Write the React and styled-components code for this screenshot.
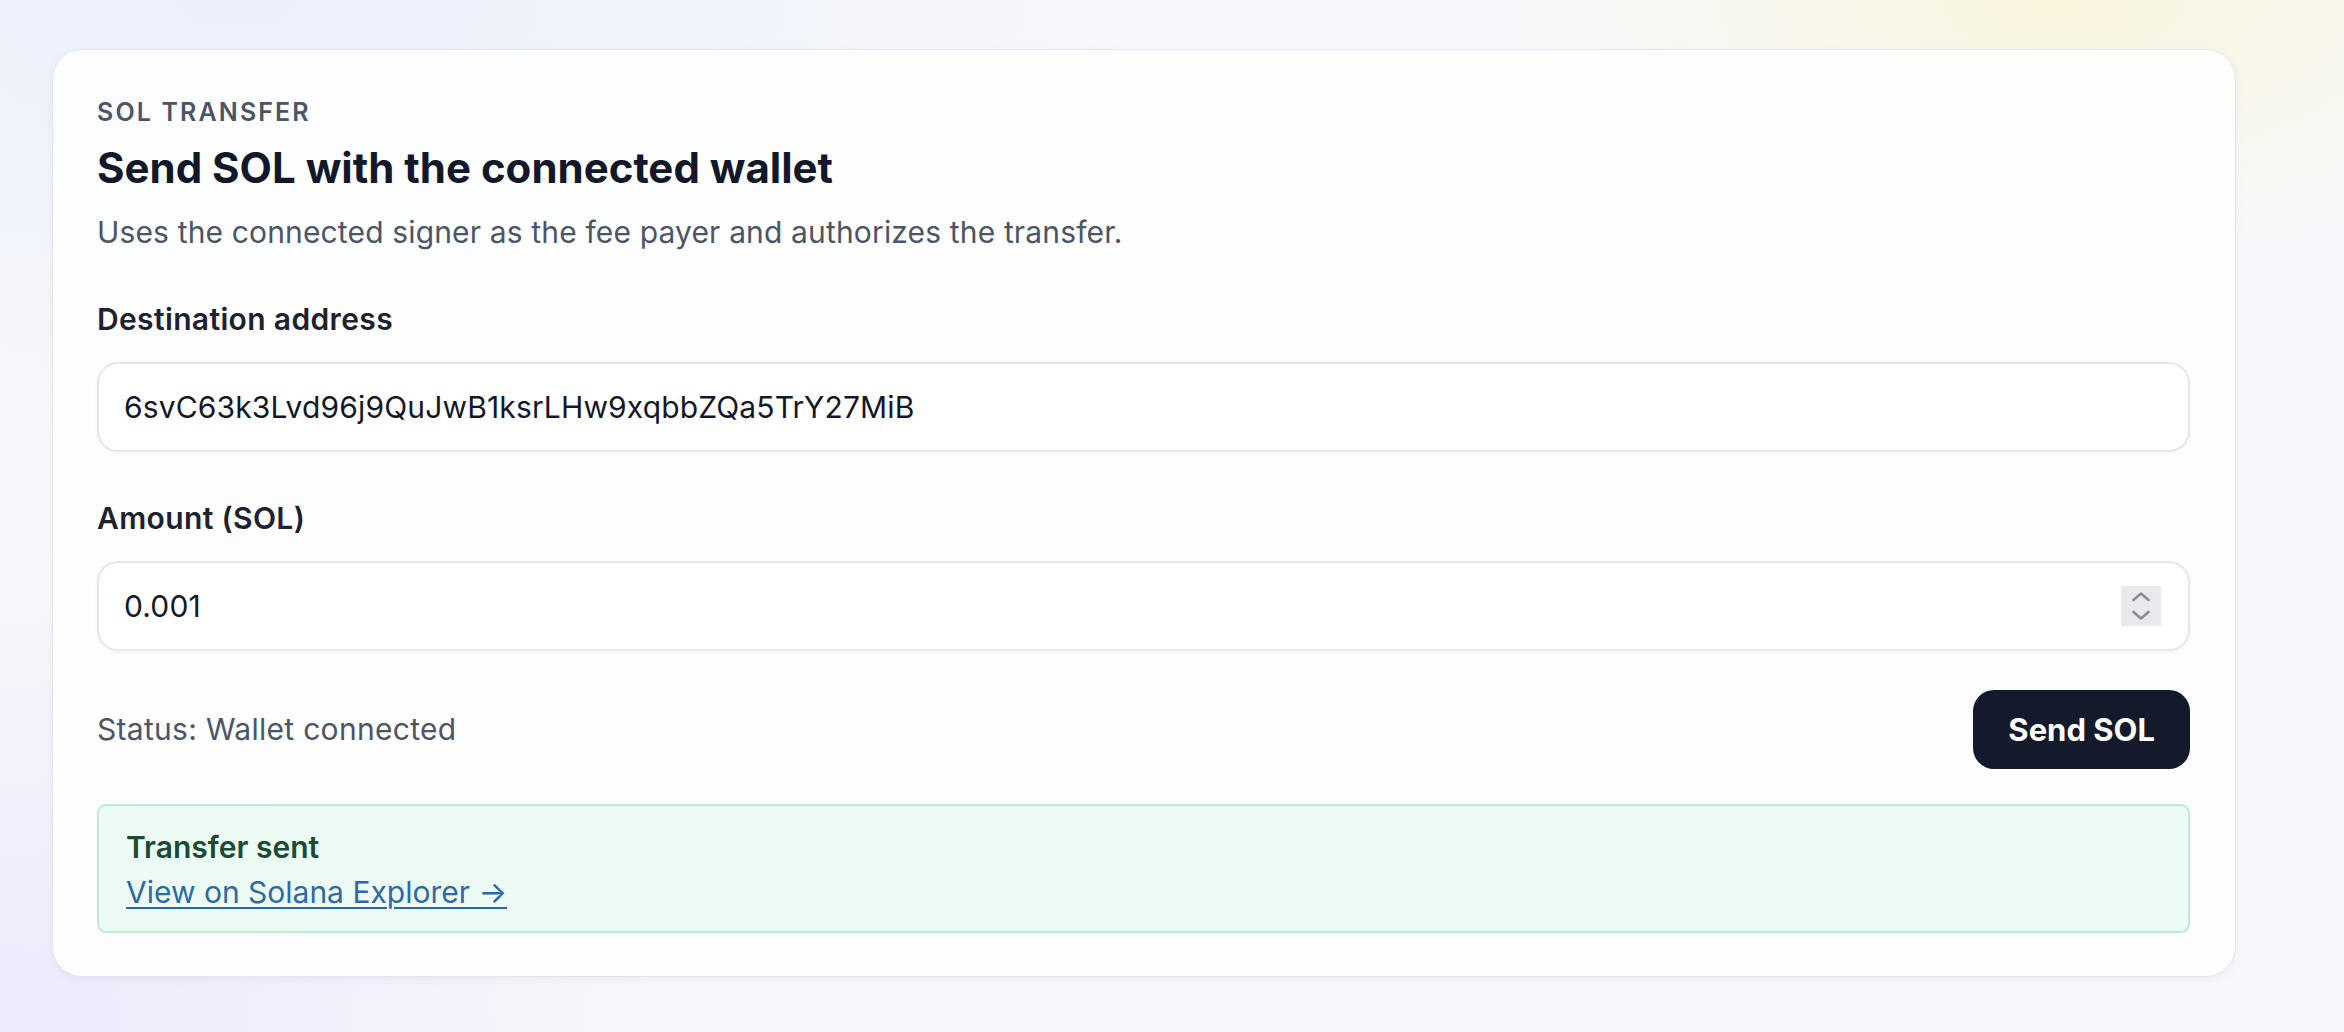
import React from 'react';
import styled, {createGlobalStyle} from 'styled-components';

const GlobalStyle = createGlobalStyle`
  html, body {
    margin: 0;
    padding: 0;
  }
  body {
    font-family: Inter, "Noto Sans", "Liberation Sans", sans-serif;
    -webkit-font-smoothing: antialiased;
  }
  * { box-sizing: border-box; }
`

function Chevrons () {
    return (
        <svg width="40" height="40" viewBox="0 0 40 40" fill="none">
            <path d="M12.5 14 L20 7.5 L27.5 14" stroke="#8d8d92" strokeWidth="2.6" strokeLinecap="round" strokeLinejoin="round"/>
            <path d="M12.5 26 L20 32.5 L27.5 26" stroke="#8d8d92" strokeWidth="2.6" strokeLinecap="round" strokeLinejoin="round"/>
        </svg>
    )
}

function App () {
    return (
        <PAGE>
            <GlobalStyle/>
            <CARD>
                <EYEBROW>SOL TRANSFER</EYEBROW>
                <TITLE>Send SOL with the connected wallet</TITLE>
                <SUBTITLE>Uses the connected signer as the fee payer and authorizes the transfer.</SUBTITLE>

                <FORM>
                    <FIELD>
                        <LABEL htmlFor="dest">Destination address</LABEL>
                        <INPUT_SHELL>
                            <TEXT_INPUT id="dest" defaultValue="6svC63k3Lvd96j9QuJwB1ksrLHw9xqbbZQa5TrY27MiB"/>
                        </INPUT_SHELL>
                    </FIELD>
                    <FIELD>
                        <LABEL htmlFor="amount">Amount (SOL)</LABEL>
                        <INPUT_SHELL>
                            <TEXT_INPUT id="amount" defaultValue="0.001"/>
                            <SPINNER><Chevrons/></SPINNER>
                        </INPUT_SHELL>
                    </FIELD>
                </FORM>

                <STATUS_ROW>
                    <STATUS>Status: Wallet connected</STATUS>
                    <SEND_BUTTON>Send SOL</SEND_BUTTON>
                </STATUS_ROW>

                <NOTICE>
                    <NOTICE_TITLE>Transfer sent</NOTICE_TITLE>
                    <NOTICE_LINK href="#">View on Solana Explorer →</NOTICE_LINK>
                </NOTICE>
            </CARD>
        </PAGE>
    )
}

export default App;

const PAGE = styled.div `
min-height:1032px;
padding:49px 0 56px 52px;
background:
  radial-gradient(800px 380px at 88% 0%, rgba(250,244,214,0.8), rgba(250,244,214,0) 70%),
  radial-gradient(1000px 700px at 0% 100%, rgba(238,232,252,0.95), rgba(238,232,252,0) 70%),
  radial-gradient(1300px 600px at 10% 0%, rgba(235,240,251,1), rgba(235,240,251,0) 75%),
  #f7f8fb;
`

const CARD = styled.div `
width:2184px;
padding:44px 45px 43px 44px;
border:1.5px solid #e3e6ee;
border-radius:30px;
background:rgba(255,255,255,0.86);
box-shadow:0 3px 8px rgba(20,30,60,0.05);
`

const EYEBROW = styled.div `
font-size:25px;
line-height:36px;
font-weight:600;
letter-spacing:0.085em;
color:#4b5565;
`

const TITLE = styled.h1 `
margin:11px 0 0 0;
font-size:42px;
line-height:54px;
font-weight:700;
letter-spacing:0;
color:#121829;
`

const SUBTITLE = styled.p `
margin:15px 0 0 0;
font-size:30px;
line-height:45px;
letter-spacing:0.005em;
color:#4b5565;
`

const FORM = styled.div `
margin-top:42px;
display:flex;
flex-direction:column;
gap:44px;
`

const FIELD = styled.div `
display:flex;
flex-direction:column;
gap:20px;
`

const LABEL = styled.label `
font-size:30px;
line-height:45px;
font-weight:600;
letter-spacing:0.012em;
color:#1c2230;
`

const INPUT_SHELL = styled.div `
display:flex;
align-items:center;
height:90px;
padding:0 27px 0 25px;
border:2px solid #e5e7ec;
border-radius:21px;
background:#ffffff;
box-shadow:0 2px 4px rgba(20,30,60,0.04);
`

const TEXT_INPUT = styled.input `
flex:1;
min-width:0;
border:none;
outline:none;
padding:0;
background:transparent;
font-family:inherit;
font-size:30px;
letter-spacing:0.005em;
color:#121829;
`

const SPINNER = styled.div `
width:40px;
height:40px;
background:#e9e9ed;
display:flex;
align-items:center;
justify-content:center;
`

const STATUS_ROW = styled.div `
margin-top:39px;
display:flex;
align-items:center;
justify-content:space-between;
`

const STATUS = styled.div `
font-size:30px;
line-height:45px;
letter-spacing:0.01em;
color:#4b5565;
`

const SEND_BUTTON = styled.button `
height:79px;
padding:0 35px;
border:none;
border-radius:21px;
background:#131a2b;
color:#ffffff;
font-family:inherit;
font-size:31px;
font-weight:700;
cursor:pointer;
`

const NOTICE = styled.div `
margin-top:35px;
padding:19px 27px 16px 27px;
border:2px solid #bfead5;
border-radius:9px;
background:#ecfcf4;
display:flex;
flex-direction:column;
align-items:flex-start;
`

const NOTICE_TITLE = styled.div `
font-size:30px;
line-height:45px;
font-weight:600;
color:#1b4a35;
`

const NOTICE_LINK = styled.a `
font-size:30px;
line-height:45px;
color:#2c69a6;
text-decoration:underline;
text-underline-offset:4px;
text-decoration-thickness:2px;
`
